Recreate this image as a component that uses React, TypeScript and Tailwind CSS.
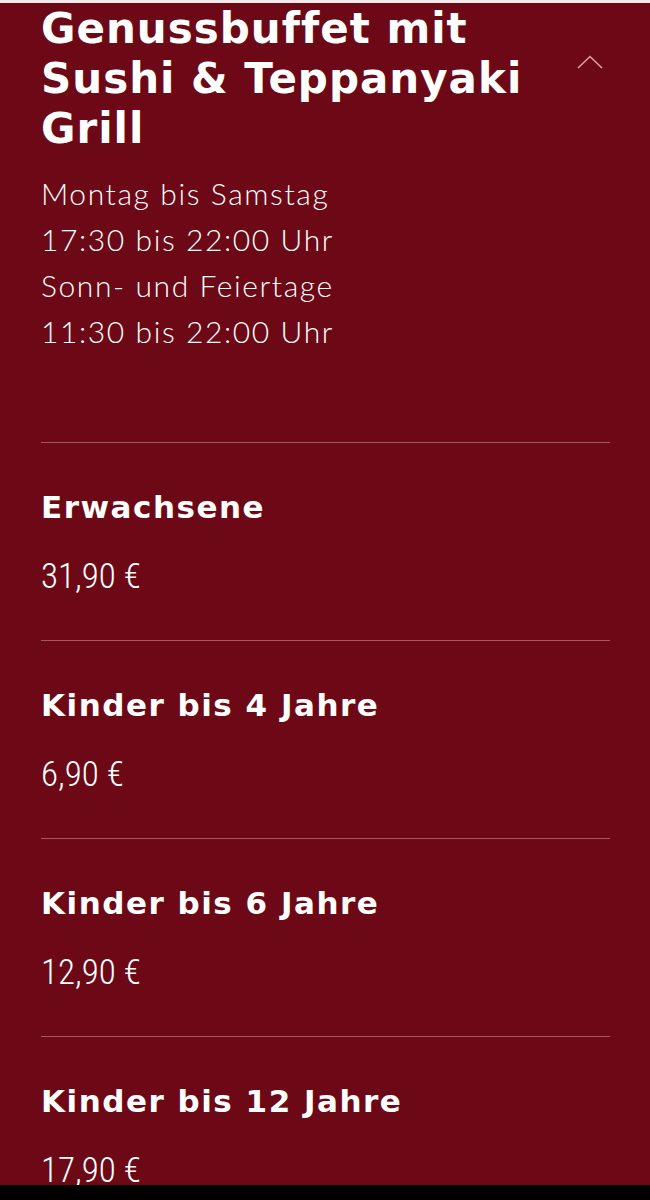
import React from 'react';

const prices = [
  { label: 'Erwachsene', price: '31,90 €' },
  { label: 'Kinder bis 4 Jahre', price: '6,90 €' },
  { label: 'Kinder bis 6 Jahre', price: '12,90 €' },
  { label: 'Kinder bis 12 Jahre', price: '17,90 €' },
];

const hours = ['Montag bis Samstag', '17:30 bis 22:00 Uhr', 'Sonn- und Feiertage', '11:30 bis 22:00 Uhr'];

export default function App() {
  return (
    <div className="h-[1200px] flex flex-col bg-black">
      <div className="h-[3px] bg-[#f6e9eb]" />

      <div className="flex-1 overflow-hidden bg-[#6d0916] px-[41px] pr-[40px] text-white">
        {/* Kopf */}
        <div className="flex items-start justify-between">
          <h1 className="pt-[1px] font-['DejaVu_Sans',Arial,sans-serif] text-[42px] leading-[50px] font-bold tracking-[1px]">
            Genussbuffet mit
            <br />
            Sushi &amp; Teppanyaki
            <br />
            Grill
          </h1>
          <svg width="26" height="14" viewBox="0 0 26 14" className="mt-[52px] mr-[7px] shrink-0">
            <polyline points="1,13 13,1.5 25,13" fill="none" stroke="#e59aa5" strokeWidth="1.6" />
          </svg>
        </div>

        {/* Öffnungszeiten */}
        <div className="mt-4 font-['Lato','Noto_Sans',sans-serif] text-[30px] leading-[46px] font-light tracking-[1.6px]">
          {hours.map((h) => (
            <p key={h}>{h}</p>
          ))}
        </div>

        {/* Preise */}
        <div className="mt-[88px]">
          {prices.map((p) => (
            <div key={p.label} className="border-t border-[#a35762] pt-[46px] pb-[43px]">
              <h3 className="font-['DejaVu_Sans',Arial,sans-serif] text-[31px] leading-[36px] font-bold tracking-[1.5px]">
                {p.label}
              </h3>
              <p className="mt-8 font-['Liberation_Sans_Narrow','Roboto_Condensed','Open_Sans',sans-serif] font-stretch-condensed text-[35px] leading-[40px] font-light">
                {p.price}
              </p>
            </div>
          ))}
        </div>
      </div>

      <div className="h-[15px] bg-black" />
    </div>
  );
}
